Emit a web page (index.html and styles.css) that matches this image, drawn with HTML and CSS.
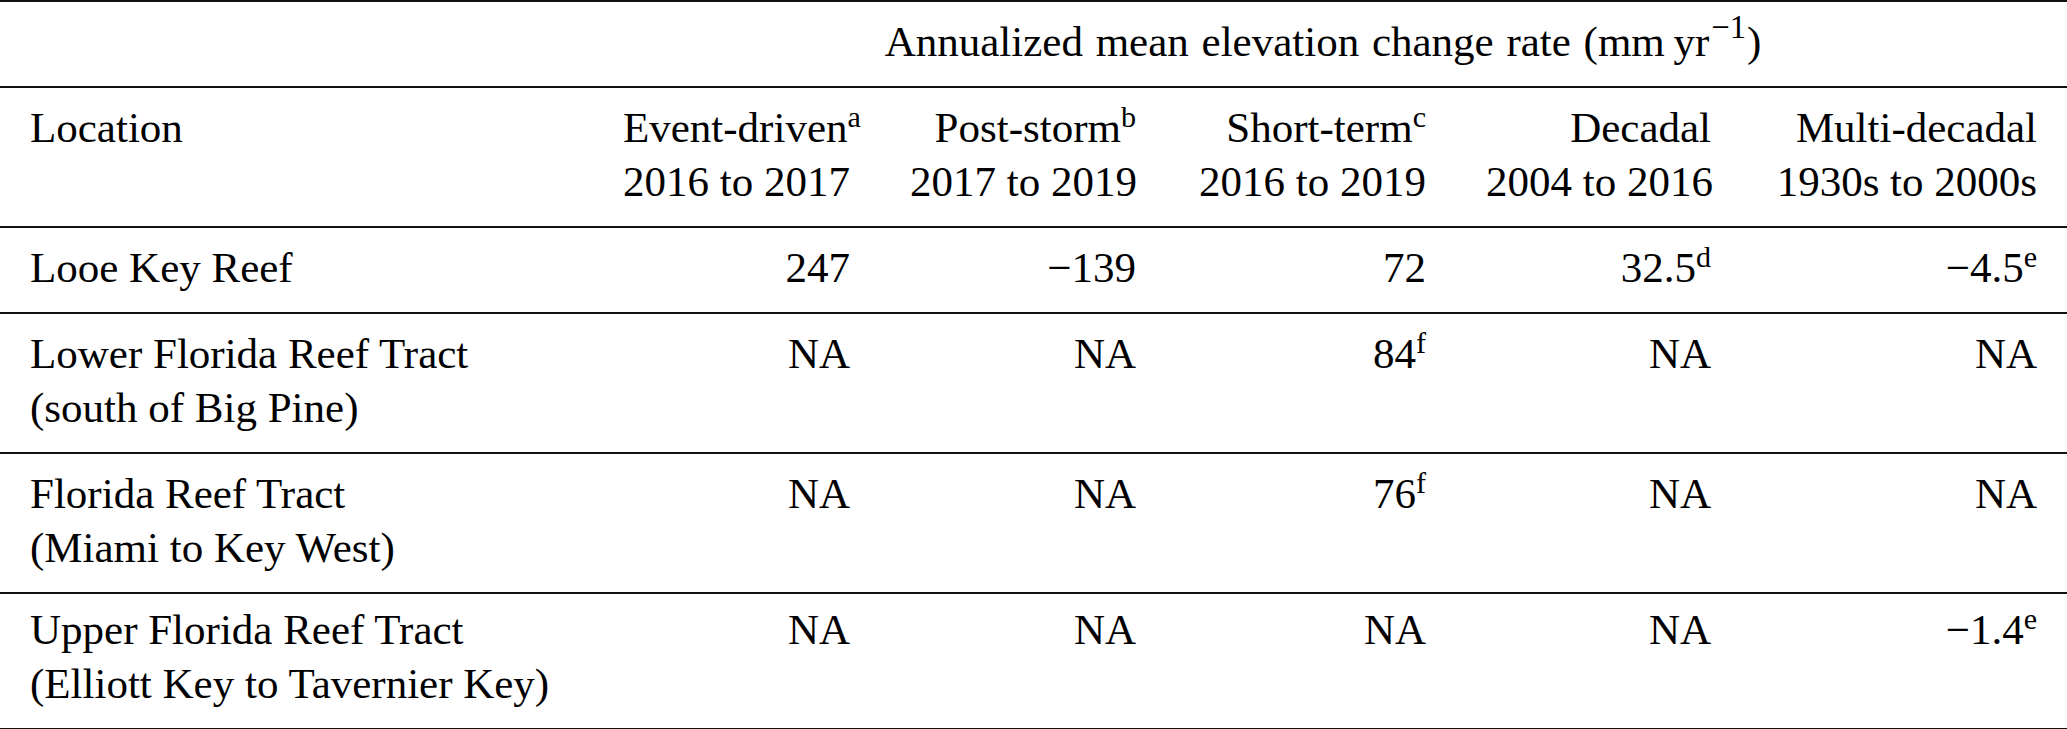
FILE: index.html
```html
<!DOCTYPE html>
<html lang="en">
<head>
<meta charset="utf-8">
<title>Annualized mean elevation change rate</title>
<link rel="stylesheet" href="styles.css">
</head>
<body>
<table class="data">
  <colgroup>
    <col class="c-loc">
    <col class="c-1">
    <col class="c-2">
    <col class="c-3">
    <col class="c-4">
    <col class="c-5">
  </colgroup>
  <thead>
    <tr class="group">
      <th></th>
      <th colspan="5" class="span">Annualized mean elevation change rate (mm&thinsp;yr<sup class="exp">−1</sup>)</th>
    </tr>
    <tr class="heads">
      <th class="loc">Location</th>
      <th>Event-driven<sup>a</sup><br>2016 to 2017</th>
      <th>Post-storm<sup>b</sup><br>2017 to 2019</th>
      <th>Short-term<sup>c</sup><br>2016 to 2019</th>
      <th>Decadal<br>2004 to 2016</th>
      <th>Multi-decadal<br>1930s to 2000s</th>
    </tr>
  </thead>
  <tbody>
    <tr>
      <td class="loc">Looe Key Reef</td>
      <td>247</td>
      <td>−139</td>
      <td>72</td>
      <td>32.5<sup>d</sup></td>
      <td>−4.5<sup>e</sup></td>
    </tr>
    <tr>
      <td class="loc">Lower Florida Reef Tract<br>(south of Big Pine)</td>
      <td>NA</td>
      <td>NA</td>
      <td>84<sup>f</sup></td>
      <td>NA</td>
      <td>NA</td>
    </tr>
    <tr>
      <td class="loc">Florida Reef Tract<br>(Miami to Key West)</td>
      <td>NA</td>
      <td>NA</td>
      <td>76<sup>f</sup></td>
      <td>NA</td>
      <td>NA</td>
    </tr>
    <tr class="last">
      <td class="loc">Upper Florida Reef Tract<br>(Elliott Key to Tavernier Key)</td>
      <td>NA</td>
      <td>NA</td>
      <td>NA</td>
      <td>NA</td>
      <td>−1.4<sup>e</sup></td>
    </tr>
  </tbody>
</table>
</body>
</html>
```

FILE: styles.css
```css
html, body {
  margin: 0;
  padding: 0;
  background: #ffffff;
}

.data {
  width: 2067px;
  border-collapse: collapse;
  table-layout: fixed;
  font-family: "Liberation Serif", "Times New Roman", serif;
  font-size: 43px;
  line-height: 54px;
  color: #000000;
}

.c-loc { width: 593px; }
.c-1 { width: 287px; }
.c-2 { width: 286px; }
.c-3 { width: 290px; }
.c-4 { width: 285px; }
.c-5 { width: 326px; }

.data tr {
  border-top: 2px solid #111111;
}

.data tr.last {
  border-bottom: 2px solid #111111;
}

.data th,
.data td {
  padding: 13px 30px 17px 30px;
  text-align: right;
  vertical-align: top;
  font-weight: normal;
  white-space: nowrap;
}

.data .loc {
  text-align: left;
}

.data th.span {
  text-align: center;
  word-spacing: 2px;
  padding-right: 44px;
}

.data tr.last td {
  padding-top: 9px;
}

.data sup {
  font-size: 0.7em;
  line-height: 0;
  vertical-align: 0.5em;
}

.data sup.exp {
  font-size: 0.76em;
  vertical-align: 0.55em;
  margin-left: 2px;
  margin-right: 1px;
}
```
